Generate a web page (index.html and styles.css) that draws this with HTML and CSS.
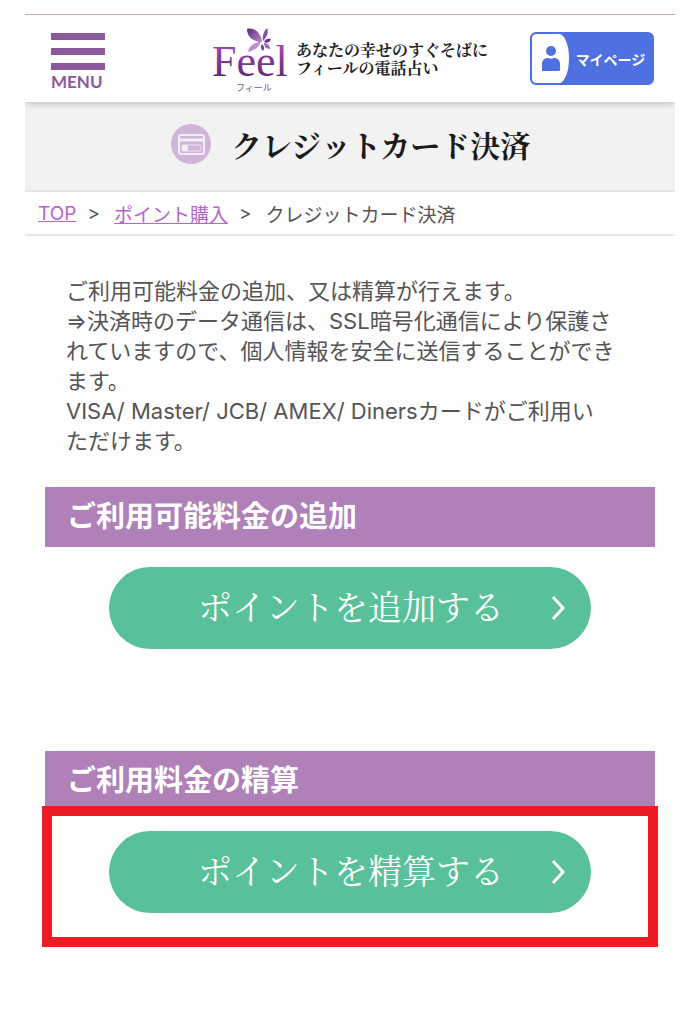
FILE: index.html
```html
<!DOCTYPE html>
<html lang="ja">
<head>
  <meta charset="UTF-8" />
  <title>クレジットカード決済</title>
  <meta name="viewport" content="width=device-width, initial-scale=1.0" />
  <link rel="stylesheet" href="styles.css">
</head>
<body>

  <div class="page">

    <!-- Header -->
    <header class="header">
      <button type="button" class="menu-btn">
        <span class="bar"></span>
        <span class="bar"></span>
        <span class="bar"></span>
        <span class="menu-label">MENU</span>
      </button>

      <a href="#" class="brand">
        <svg class="logo" width="76" height="68" viewBox="0 0 76 68" role="img" aria-label="Feel フィール">
          <defs>
            <linearGradient id="purple" x1="0" y1="0" x2="0" y2="1">
              <stop offset="0" stop-color="#b04cc0" />
              <stop offset="1" stop-color="#4f2468" />
            </linearGradient>
            <linearGradient id="petal" x1="0" y1="0" x2="1" y2="1">
              <stop offset="0" stop-color="#5d2b7d" />
              <stop offset="1" stop-color="#b98ac6" />
            </linearGradient>
          </defs>
          <text class="logo-name" x="0" y="51" fill="url(#purple)">Feel</text>
          <text class="logo-kana" x="24" y="66">フィール</text>
          <path fill="url(#petal)" d="M35 4c6-2 14 3 15 13c-7 0-15-4-15-13z" />
          <path fill="#8d4fa0" d="M55 3c2 4 0 9-4 13c-1-5 1-10 4-13z" />
          <path fill="#6b3589" d="M52 17c1-3 4-4 7-3c-1 3-4 5-7 3z" />
          <path fill="#a066b0" d="M52 18c3 0 6 2 6 6c-4 0-6-3-6-6z" />
          <path fill="#7a4094" d="M50 19c2 2 3 4 1 7c-2-2-3-4-1-7z" />
          <path fill="#c193cc" d="M49 17c-2 5-6 8-13 10c1-6 6-10 13-10z" />
        </svg>
        <span class="tagline">あなたの幸せのすぐそばに<br>フィールの電話占い</span>
      </a>

      <a href="#" class="mypage">
        <span class="mypage-icon">
          <svg width="18" height="25" viewBox="0 0 18 25" aria-hidden="true">
            <circle cx="9" cy="5" r="5" />
            <path d="M0 24v-6c0-4 3-6 6-6c2 1 4 1 6 0c3 0 6 2 6 6v6q0 1-1 1H1q-1 0-1-1z" />
          </svg>
        </span>
        <span class="mypage-label">マイページ</span>
      </a>
    </header>

    <!-- Page title -->
    <div class="title">
      <svg width="42" height="42" viewBox="0 0 42 42" aria-hidden="true">
        <circle cx="21" cy="21" r="20" fill="#cfb6d8" />
        <rect x="9" y="12" width="25" height="19" rx="2" fill="none" stroke="#f4edf7" stroke-width="2" />
        <path d="M9 17h25" stroke="#f4edf7" stroke-width="3" />
        <rect x="12" y="22" width="19" height="6" rx="1" fill="none" stroke="#eee4f2" stroke-width="1" />
        <rect x="12" y="22" width="6" height="6" rx="2" fill="#f4edf7" />
      </svg>
      <h1>クレジットカード決済</h1>
    </div>

    <!-- Breadcrumb -->
    <nav class="breadcrumb">
      <a href="#">TOP</a>
      <span class="sep">&gt;</span>
      <a href="#">ポイント購入</a>
      <span class="sep">&gt;</span>
      <span>クレジットカード決済</span>
    </nav>

    <main>
      <p class="lead">
        ご利用可能料金の追加、又は精算が行えます。<br>
        ⇒決済時のデータ通信は、SSL暗号化通信により保護されていますので、個人情報を安全に送信することができます。<br>
        VISA/ Master/ JCB/ AMEX/ Dinersカードがご利用い<br>ただけます。
      </p>

      <section class="block">
        <h2>ご利用可能料金の追加</h2>
        <div class="action">
          <button type="button" class="point-btn">
            <span>ポイントを追加する</span>
            <svg width="14" height="26" viewBox="0 0 14 26" aria-hidden="true"><path d="M2 2l10 11L2 24" /></svg>
          </button>
        </div>
      </section>

      <section class="block">
        <h2>ご利用料金の精算</h2>
        <div class="action highlight">
          <button type="button" class="point-btn">
            <span>ポイントを精算する</span>
            <svg width="14" height="26" viewBox="0 0 14 26" aria-hidden="true"><path d="M2 2l10 11L2 24" /></svg>
          </button>
        </div>
      </section>
    </main>

  </div>

</body>
</html>
```
FILE: styles.css
```css
* {
  box-sizing: border-box;
}

body {
  margin: 0;
  background-color: #fefefe;
  color: #555;
  font-family: Inter, 'Noto Sans CJK JP', sans-serif;
}

a {
  color: #b865cc;
}

button {
  border: none;
  cursor: pointer;
  font-family: inherit;
}

.page {
  margin: 14px 25px 0;
  border-top: 1px solid #cfa6d2;
}

/* Header */
.header {
  position: relative;
  display: flex;
  align-items: center;
  height: 87px;
  padding: 0 21px 0 26px;
  background: #fff;
  box-shadow: 0 2px 6px rgba(0, 0, 0, 0.2);
  clip-path: inset(0 0 -10px 0);
}

.menu-btn {
  display: flex;
  flex-direction: column;
  gap: 8px;
  width: 54px;
  padding: 5px 0 0;
  background: none;
  color: #8a5a9c;
}

.bar {
  height: 7px;
  background-color: #8a5a9c;
}

.menu-label {
  margin-top: -3px;
  font-family: Lato, sans-serif;
  font-size: 17px;
  font-weight: bold;
  line-height: 14px;
  text-align: left;
}

.brand {
  display: flex;
  align-items: center;
  gap: 8px;
  margin: 0 42px 0 auto;
  color: #222;
  text-decoration: none;
}

.logo-name {
  font-family: 'Liberation Serif', serif;
  font-size: 44px;
}

.logo-kana {
  font-family: 'Noto Sans CJK JP', sans-serif;
  font-size: 9px;
  fill: #76508a;
}

.tagline {
  font-family: 'Noto Serif CJK JP', 'Noto Sans CJK JP', serif;
  font-size: 16px;
  font-weight: bold;
  line-height: 18px;
  white-space: nowrap;
}

.mypage {
  display: flex;
  align-items: center;
  width: 124px;
  height: 53px;
  border: 2px solid #4f70e0;
  border-radius: 6px;
  background-color: #4f70e0;
  color: #fff;
  text-decoration: none;
  overflow: hidden;
}

.mypage-icon {
  display: flex;
  align-items: center;
  justify-content: center;
  width: 37px;
  height: 100%;
  border-radius: 4px 10px 10px 4px / 4px 50% 50% 4px;
  background-color: #fff;
  fill: #4f70e0;
}

.mypage-label {
  flex: 1;
  text-align: center;
  font-size: 14px;
  font-weight: bold;
}

/* Page title */
.title {
  display: flex;
  align-items: center;
  justify-content: center;
  gap: 20px;
  height: 90px;
  padding-bottom: 5px;
  border-bottom: 2px solid #e6e6e6;
  background-color: #f2f2f2;
}

h1 {
  margin: 0;
  color: #1a1a1a;
  font-family: 'Noto Serif CJK JP', 'Noto Sans CJK JP', serif;
  font-size: 30px;
  font-weight: bold;
  line-height: 40px;
}

/* Breadcrumb */
.breadcrumb {
  display: flex;
  align-items: center;
  height: 44px;
  padding: 0 13px;
  border-bottom: 2px solid #e6e6e6;
  font-size: 19px;
}

.sep {
  margin: 0 14px 0 11px;
}

/* Contents */
main {
  padding: 0 20px;
}

.lead {
  margin: 40px 25px 31px 21px;
  font-size: 22px;
  line-height: 30px;
}

.block {
  margin-bottom: 102px;
}

h2 {
  margin: 0;
  padding: 0 22px;
  background-color: #b081b8;
  color: #fff;
  font-size: 29px;
  font-weight: bold;
  line-height: 60px;
}

.action {
  padding: 20px 64px 0;
}

.point-btn {
  display: flex;
  align-items: center;
  justify-content: space-between;
  width: 100%;
  height: 82px;
  padding: 0 26px 0 89px;
  border-radius: 41px;
  background-color: #59c199;
  color: #fff;
  font-family: 'Noto Serif CJK JP', 'Noto Sans CJK JP', serif;
  font-size: 34px;
}

.point-btn span {
  padding-bottom: 6px;
}

.point-btn svg {
  fill: none;
  stroke: #fff;
  stroke-width: 3;
}

/* Red frame around the settlement button */
.highlight {
  margin: -5px -3px 0;
  padding: 15px 57px 24px;
  border: 10px solid #ed1c24;
}
```
